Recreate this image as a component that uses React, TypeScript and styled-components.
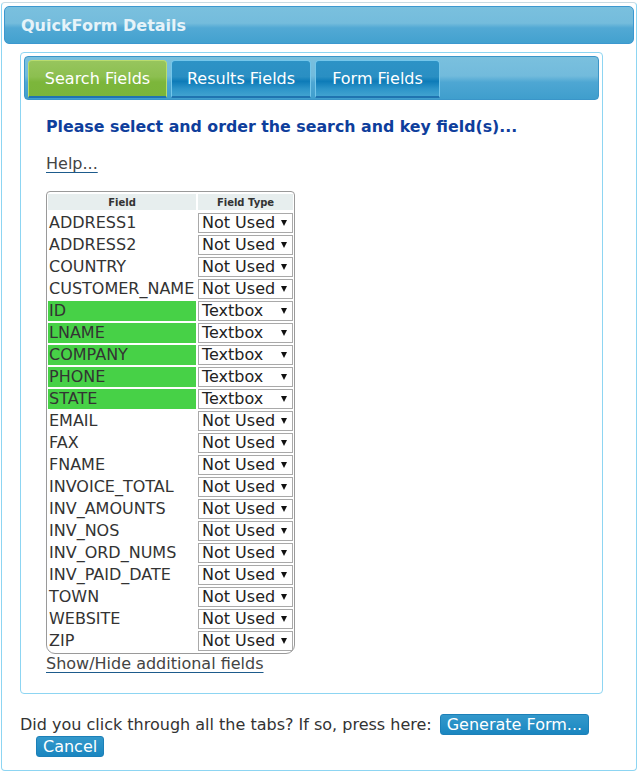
import * as React from 'react';
import styled, { createGlobalStyle } from 'styled-components';

const GlobalStyle = createGlobalStyle`
	body {
		margin: 0;
		background: #ffffff;
		font-family: 'DejaVu Sans', Verdana, sans-serif;
		color: #333333;
	}
`;

interface IFieldRow {
	name: string;
	type: string;
	key?: boolean;
}

const FIELDS: IFieldRow[] = [
	{ name: 'ADDRESS1', type: 'Not Used' },
	{ name: 'ADDRESS2', type: 'Not Used' },
	{ name: 'COUNTRY', type: 'Not Used' },
	{ name: 'CUSTOMER_NAME', type: 'Not Used' },
	{ name: 'ID', type: 'Textbox', key: true },
	{ name: 'LNAME', type: 'Textbox', key: true },
	{ name: 'COMPANY', type: 'Textbox', key: true },
	{ name: 'PHONE', type: 'Textbox', key: true },
	{ name: 'STATE', type: 'Textbox', key: true },
	{ name: 'EMAIL', type: 'Not Used' },
	{ name: 'FAX', type: 'Not Used' },
	{ name: 'FNAME', type: 'Not Used' },
	{ name: 'INVOICE_TOTAL', type: 'Not Used' },
	{ name: 'INV_AMOUNTS', type: 'Not Used' },
	{ name: 'INV_NOS', type: 'Not Used' },
	{ name: 'INV_ORD_NUMS', type: 'Not Used' },
	{ name: 'INV_PAID_DATE', type: 'Not Used' },
	{ name: 'TOWN', type: 'Not Used' },
	{ name: 'WEBSITE', type: 'Not Used' },
	{ name: 'ZIP', type: 'Not Used' }
];

const TABS = ['Search Fields', 'Results Fields', 'Form Fields'];
const TAB_WIDTHS = [139, 140, 125];

const App: React.FunctionComponent = () => {
	return (
		<>
			<GlobalStyle />
			<Frame>
				<TitleBar>QuickForm Details</TitleBar>
				<Panel>
					<TabBar>
						{TABS.map((t, i) => (
							<Tab key={t} $active={i === 0} $width={TAB_WIDTHS[i]}>
								{t}
							</Tab>
						))}
					</TabBar>
					<Content>
						<Heading>Please select and order the search and key field(s)...</Heading>
						<TextLink $gap={17}>Help...</TextLink>
						<FieldTable>
							<HeadCell>Field</HeadCell>
							<HeadCell>Field Type</HeadCell>
							{FIELDS.map(f => (
								<React.Fragment key={f.name}>
									<NameCell $key={f.key}>{f.name}</NameCell>
									<SelectBox>
										{f.type}
										<Arrow />
									</SelectBox>
								</React.Fragment>
							))}
						</FieldTable>
						<TextLink $gap={0}>Show/Hide additional fields</TextLink>
					</Content>
				</Panel>
				<Footer>
					<FooterLine>
						Did you click through all the tabs? If so, press here:
						<BlueButton>Generate Form...</BlueButton>
					</FooterLine>
					<FooterLine $indent>
						<BlueButton>Cancel</BlueButton>
					</FooterLine>
				</Footer>
			</Frame>
		</>
	);
};

export default App;

const Frame = styled.div`
	box-sizing: border-box;
	margin: 2px 1px 2px 1px;
	height: 769px;
	border: 1px solid #8dd5f2;
	border-top-color: #c9dbe3;
	border-radius: 4px;
	padding: 3px 2px;
`;

const TitleBar = styled.div`
	box-sizing: border-box;
	height: 38px;
	border: 1px solid #3c98cf;
	border-radius: 5px;
	padding-left: 16px;
	display: flex;
	align-items: center;
	font-weight: bold;
	font-size: 16px;
	color: #e6f3f9;
	background: linear-gradient(
		to bottom,
		#7ac0de 0%,
		#74bcdc 45%,
		#52a9d4 58%,
		#43a1cf 100%
	);
`;

const Panel = styled.div`
	box-sizing: border-box;
	margin: 8px 0 0 16px;
	width: 583px;
	height: 642px;
	border: 1px solid #8dd5f2;
	border-radius: 4px;
	padding: 3px;
`;

const TabBar = styled.div`
	box-sizing: border-box;
	height: 44px;
	display: flex;
	align-items: flex-end;
	gap: 4px;
	padding: 0 0 1px 3px;
	border: 1px solid #3a95c8;
	border-radius: 4px;
	background: linear-gradient(
		to bottom,
		#7ac0de 0%,
		#72bbdc 45%,
		#4ea7d3 60%,
		#3f9ecd 100%
	);
`;

const Tab = styled.div<{ $active?: boolean; $width: number }>`
	box-sizing: border-box;
	width: ${p => p.$width}px;
	height: 38px;
	display: flex;
	align-items: center;
	justify-content: center;
	font-size: 16px;
	color: #ffffff;
	border-radius: 4px 4px 0 0;
	border: 1px solid ${p => (p.$active ? '#b9dc6e' : '#74c6ea')};
	border-bottom: 2px solid #1f73b0;
	background: ${p =>
		p.$active
			? 'linear-gradient(to bottom, #97c55d 0%, #8cbf50 45%, #7cb63b 60%, #7ab53a 100%)'
			: 'linear-gradient(to bottom, #2d93c6 0%, #2a8fc3 45%, #0d7bb8 58%, #2e95c9 80%, #40a2d0 100%)'};
`;

const Content = styled.div`
	padding: 17px 0 0 22px;
`;

const Heading = styled.div`
	font-weight: bold;
	font-size: 15.8px;
	color: #0e3e9c;
	line-height: 20px;
`;

const TextLink = styled.div<{ $gap: number }>`
	display: inline-block;
	margin-top: ${p => p.$gap}px;
	font-size: 16px;
	line-height: 20px;
	color: #444444;
	text-decoration: underline;
	text-decoration-color: #1d5b8c;
	text-underline-offset: 3px;
`;

const FieldTable = styled.div`
	box-sizing: border-box;
	margin-top: 17px;
	width: 249px;
	display: grid;
	grid-template-columns: 148px 95px;
	column-gap: 2px;
	row-gap: 2px;
	padding: 2px 1px 2px 1px;
	border: 1px solid #9a9a9a;
	border-radius: 4px 4px 9px 9px;
`;

const HeadCell = styled.div`
	height: 16px;
	margin-bottom: 1px;
	background: #e7eeee;
	font-size: 10px;
	font-weight: bold;
	color: #333333;
	display: flex;
	align-items: center;
	justify-content: center;
`;

const NameCell = styled.div<{ $key?: boolean }>`
	height: 20px;
	line-height: 20px;
	padding-left: 1px;
	font-size: 16px;
	color: #333333;
	white-space: nowrap;
	background: ${p => (p.$key ? '#47d147' : 'transparent')};
`;

const SelectBox = styled.div`
	position: relative;
	box-sizing: border-box;
	height: 20px;
	border: 1px solid #a9a9a9;
	background: #ffffff;
	padding-left: 3px;
	font-size: 16px;
	line-height: 18px;
	color: #222222;
	white-space: nowrap;
`;

const Arrow = styled.span`
	position: absolute;
	right: 5px;
	top: 6px;
	width: 0;
	height: 0;
	border-left: 3px solid transparent;
	border-right: 3px solid transparent;
	border-top: 6px solid #111111;
`;

const Footer = styled.div`
	padding: 19px 0 0 16px;
	font-size: 16px;
	color: #333333;
`;

const FooterLine = styled.div<{ $indent?: boolean }>`
	display: flex;
	align-items: center;
	gap: 8px;
	height: 22px;
	padding-left: ${p => (p.$indent ? '16px' : '0')};
`;

const BlueButton = styled.span`
	box-sizing: border-box;
	height: 21px;
	display: inline-flex;
	align-items: center;
	padding: 0 6px;
	border: 1px solid #1c80b8;
	border-radius: 3px;
	color: #ffffff;
	font-size: 16px;
	background: linear-gradient(to bottom, #3398cb 0%, #2790c6 50%, #1a86c0 100%);
`;
